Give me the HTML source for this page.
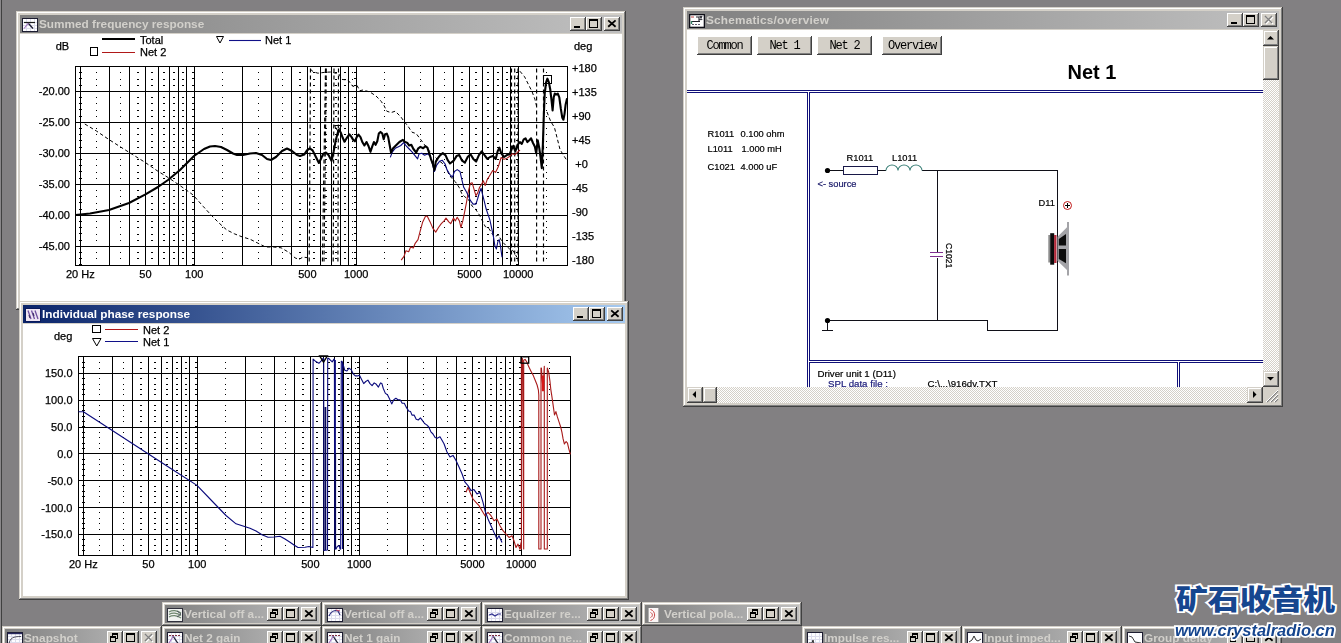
<!DOCTYPE html><html><head><meta charset="utf-8"><title>Speaker crossover simulation</title><style>
html,body{margin:0;padding:0}
body{width:1341px;height:643px;overflow:hidden;background:#828082;position:relative;font-family:"Liberation Sans",sans-serif;}
.win,.mini{will-change:transform}
.edge{position:absolute;left:0;top:0;width:2px;height:643px;background:linear-gradient(90deg,#8a888a 0 1px,#404040 1px 2px)}
.win{position:absolute;background:#d4d0c8;box-shadow:inset -1px -1px 0 #404040,inset 1px 1px 0 #d4d0c8,inset -2px -2px 0 #808080,inset 2px 2px 0 #fff}
.tb{position:absolute;left:4px;top:4px;right:4px;height:18px;background:linear-gradient(90deg,#808080,#c0c0c0)}
.tb.act{background:linear-gradient(90deg,#0a246a,#a6caf0)}
.tt{position:absolute;left:19px;top:1.5px;font-weight:bold;font-size:11.8px;line-height:15px;color:#d2d0cb;white-space:nowrap}
.act .tt{color:#fff}
.ic{position:absolute;left:2px;top:3px;width:16px;height:14px}
.btn{position:absolute;top:2px;width:16px;height:14px;background:#d4d0c8;box-shadow:inset -1px -1px 0 #404040,inset 1px 1px 0 #fff,inset -2px -2px 0 #808080,inset 2px 2px 0 #d4d0c8}
.btn svg{position:absolute;left:0;top:0}
.cl{position:absolute;left:4px;top:23px;right:4px;bottom:4px;background:#fff;overflow:hidden}
.mini{position:absolute;width:160px;height:24px;background:#d4d0c8;box-shadow:inset -1px -1px 0 #404040,inset 1px 1px 0 #d4d0c8,inset -2px -2px 0 #808080,inset 2px 2px 0 #fff}
.mini .tb{left:3px;top:3px;right:3px}
svg text{font-family:"Liberation Sans",sans-serif}
.pb{position:absolute;top:36px;height:19px;background:#d4d0c8;box-shadow:inset -1px -1px 0 #404040,inset 1px 1px 0 #fff,inset -2px -2px 0 #808080;font-family:"Liberation Mono",monospace;font-size:12px;letter-spacing:-1.2px;line-height:20px;text-align:center;color:#000}
.sb{position:absolute;background-color:#eae8e4;background-image:conic-gradient(#fff 25%,#d4d0c8 0 50%,#fff 0 75%,#d4d0c8 0);background-size:2px 2px}
.sbtn{position:absolute;width:16px;height:16px;background:#d4d0c8;box-shadow:inset -1px -1px 0 #404040,inset 1px 1px 0 #d4d0c8,inset -2px -2px 0 #808080,inset 2px 2px 0 #fff}
.sbtn svg{position:absolute;left:0;top:0}
.wm1{position:absolute;left:1175.5px;top:578px;font-family:"Noto Sans CJK SC",sans-serif;font-weight:900;font-size:31.5px;line-height:44px;color:#16468f;-webkit-text-stroke:4px #fff;paint-order:stroke fill;white-space:nowrap;transform:scale(1.01,0.9);transform-origin:0 0}
.wm2{position:absolute;left:1175px;top:620px;font-weight:bold;font-style:italic;font-size:16.5px;line-height:20px;color:#16468f;-webkit-text-stroke:3.5px #fff;paint-order:stroke fill;white-space:nowrap}
</style></head><body>
<div class="edge"></div>
<div class="win" style="left:16px;top:11px;width:610px;height:299px">
<div class="tb"><svg class="ic" width="16" height="14" viewBox="0 0 16 14"><rect x="0.5" y="0.5" width="15" height="13" fill="#fdfdff" stroke="#1c1c30"/><path d="M1,4.5 H15 M1,7.5 H15 M1,10.5 H15 M4.5,1 V13 M8.5,1 V13 M12.5,1 V13" stroke="#dcdcec" stroke-width="1"/><path d="M2,4.5 H13" stroke="#181818" stroke-width="1.2"/><path d="M6,5 L11,10.5" stroke="#181830" stroke-width="1.3"/><path d="M6.5,5 L2,10.5" stroke="#a070c0" stroke-width="1.1"/></svg><div class="tt">Summed frequency response</div><div class="btn" style="right:36px"><svg width="16" height="14"><rect x="4" y="9" width="6" height="2" fill="#000"/></svg></div><div class="btn" style="right:20px"><svg width="16" height="14"><rect x="3.5" y="2.5" width="8" height="8" fill="none" stroke="#000"/><rect x="3" y="2" width="9" height="2" fill="#000"/></svg></div><div class="btn" style="right:0px;margin-right:2px"><svg width="16" height="14"><path d="M4.2,3.4 L11.6,9.8 M11.6,3.4 L4.2,9.8" stroke="#000" stroke-width="1.8" fill="none"/></svg></div></div>
<div class="cl"><svg style="position:absolute;left:0;top:0" width="602" height="272" viewBox="20 34 602 272"><g stroke="#000" stroke-width="1" shape-rendering="crispEdges">
<line x1="80.5" y1="66.5" x2="80.5" y2="265.5"/>
<line x1="109.5" y1="66.5" x2="109.5" y2="265.5"/>
<line x1="129.5" y1="66.5" x2="129.5" y2="265.5"/>
<line x1="145.5" y1="66.5" x2="145.5" y2="265.5"/>
<line x1="158.5" y1="66.5" x2="158.5" y2="265.5"/>
<line x1="169.5" y1="66.5" x2="169.5" y2="265.5"/>
<line x1="178.5" y1="66.5" x2="178.5" y2="265.5"/>
<line x1="186.5" y1="66.5" x2="186.5" y2="265.5"/>
<line x1="194.5" y1="66.5" x2="194.5" y2="265.5"/>
<line x1="242.5" y1="66.5" x2="242.5" y2="265.5"/>
<line x1="271.5" y1="66.5" x2="271.5" y2="265.5"/>
<line x1="291.5" y1="66.5" x2="291.5" y2="265.5"/>
<line x1="307.5" y1="66.5" x2="307.5" y2="265.5"/>
<line x1="320.5" y1="66.5" x2="320.5" y2="265.5"/>
<line x1="331.5" y1="66.5" x2="331.5" y2="265.5"/>
<line x1="340.5" y1="66.5" x2="340.5" y2="265.5"/>
<line x1="348.5" y1="66.5" x2="348.5" y2="265.5"/>
<line x1="356.5" y1="66.5" x2="356.5" y2="265.5"/>
<line x1="404.5" y1="66.5" x2="404.5" y2="265.5"/>
<line x1="433.5" y1="66.5" x2="433.5" y2="265.5"/>
<line x1="453.5" y1="66.5" x2="453.5" y2="265.5"/>
<line x1="469.5" y1="66.5" x2="469.5" y2="265.5"/>
<line x1="482.5" y1="66.5" x2="482.5" y2="265.5"/>
<line x1="493.5" y1="66.5" x2="493.5" y2="265.5"/>
<line x1="502.5" y1="66.5" x2="502.5" y2="265.5"/>
<line x1="510.5" y1="66.5" x2="510.5" y2="265.5"/>
<line x1="518.5" y1="66.5" x2="518.5" y2="265.5"/>
<line x1="75.5" y1="91.5" x2="567.5" y2="91.5"/>
<line x1="75.5" y1="122.5" x2="567.5" y2="122.5"/>
<line x1="75.5" y1="153.5" x2="567.5" y2="153.5"/>
<line x1="75.5" y1="184.5" x2="567.5" y2="184.5"/>
<line x1="75.5" y1="215.5" x2="567.5" y2="215.5"/>
<line x1="75.5" y1="246.5" x2="567.5" y2="246.5"/>
</g>
<rect x="75.5" y="66.5" width="492.0" height="199.0" fill="none" stroke="#000" stroke-width="1" shape-rendering="crispEdges"/>
<g stroke="#000" stroke-dasharray="1 5.200" shape-rendering="crispEdges">
<line x1="96.7" y1="72.3" x2="96.7" y2="265.5" stroke-width="1.5"/>
<line x1="120.3" y1="72.3" x2="120.3" y2="265.5" stroke-width="1.5"/>
<line x1="138.0" y1="72.3" x2="138.0" y2="265.5" stroke-width="1.5"/>
<line x1="152.1" y1="72.3" x2="152.1" y2="265.5" stroke-width="1.5"/>
<line x1="163.9" y1="72.3" x2="163.9" y2="265.5" stroke-width="1.5"/>
<line x1="174.0" y1="72.3" x2="174.0" y2="265.5" stroke-width="1.5"/>
<line x1="182.8" y1="72.3" x2="182.8" y2="265.5" stroke-width="1.5"/>
<line x1="222.7" y1="72.3" x2="222.7" y2="265.5" stroke-width="1.5"/>
<line x1="258.7" y1="72.3" x2="258.7" y2="265.5" stroke-width="1.5"/>
<line x1="282.3" y1="72.3" x2="282.3" y2="265.5" stroke-width="1.5"/>
<line x1="300.0" y1="72.3" x2="300.0" y2="265.5" stroke-width="1.5"/>
<line x1="314.1" y1="72.3" x2="314.1" y2="265.5" stroke-width="1.5"/>
<line x1="325.9" y1="72.3" x2="325.9" y2="265.5" stroke-width="1.5"/>
<line x1="336.0" y1="72.3" x2="336.0" y2="265.5" stroke-width="1.5"/>
<line x1="344.8" y1="72.3" x2="344.8" y2="265.5" stroke-width="1.5"/>
<line x1="352.6" y1="72.3" x2="352.6" y2="265.5" stroke-width="1.5"/>
<line x1="384.7" y1="72.3" x2="384.7" y2="265.5" stroke-width="1.5"/>
<line x1="420.7" y1="72.3" x2="420.7" y2="265.5" stroke-width="1.5"/>
<line x1="444.3" y1="72.3" x2="444.3" y2="265.5" stroke-width="1.5"/>
<line x1="462.0" y1="72.3" x2="462.0" y2="265.5" stroke-width="1.5"/>
<line x1="476.1" y1="72.3" x2="476.1" y2="265.5" stroke-width="1.5"/>
<line x1="487.9" y1="72.3" x2="487.9" y2="265.5" stroke-width="1.5"/>
<line x1="498.0" y1="72.3" x2="498.0" y2="265.5" stroke-width="1.5"/>
<line x1="506.8" y1="72.3" x2="506.8" y2="265.5" stroke-width="1.5"/>
<line x1="546.7" y1="72.3" x2="546.7" y2="265.5" stroke-width="1.5"/>
<line x1="80.5" y1="72.2" x2="80.5" y2="265.5" stroke-width="3"/>
<line x1="193.7" y1="72.2" x2="193.7" y2="265.5" stroke-width="2.6"/>
<line x1="355.7" y1="72.2" x2="355.7" y2="265.5" stroke-width="2.6"/>
<line x1="517.7" y1="72.2" x2="517.7" y2="265.5" stroke-width="2.6"/>
</g>
<polyline points="84.8,124.0 96.4,131.0 108.9,139.5 119.8,146.5 132.2,154.3 144.7,162.1 157.1,170.7 169.5,178.4 182.0,187.0 192.9,194.8 203.3,206.5 211.1,215.1 218.9,222.9 226.7,229.9 234.4,233.8 242.2,236.9 250.0,239.2 257.8,243.1 265.5,247.0 273.3,247.0 281.1,247.8 288.9,252.4 295.1,257.9 299.0,259.4 302.9,257.1 309.1,257.9" fill="none" stroke="#000" stroke-width="1" stroke-linejoin="round" stroke-dasharray="3.5 2.5"/>
<polyline points="310.5,69.3 313.2,71.7 317.9,73.2 325.0,72.3 331.0,72.0 338.9,74.0 342.0,79.4 348.2,80.2 352.8,86.4 357.1,85.6 359.8,90.7 363.0,90.0 370.0,92.0 376.0,96.0 380.0,100.0 381.2,101.4 384.0,105.6 386.8,111.2 391.0,112.6 395.2,111.2 400.8,116.8 404.3,121.7 407.8,125.9 412.0,132.2 416.2,133.6 420.4,139.2 424.6,144.8 428.8,150.4 433.0,155.0 438.0,160.0 442.0,163.0 446.0,166.8 448.8,174.3 451.6,178.0 455.3,181.7 459.1,187.3 461.9,193.9 464.7,196.7 468.4,199.5 472.1,206.0 475.9,209.7 479.6,215.3 482.4,220.9 485.2,226.5 488.9,228.4 491.7,233.1 494.5,236.8 498.3,234.9 502.0,241.5 505.7,245.2 509.5,248.9 513.2,250.8 516.9,257.3" fill="none" stroke="#000" stroke-width="1" stroke-linejoin="round" stroke-dasharray="3.5 2.5"/>
<polyline points="519.9,71.2 524.6,76.8 528.3,84.2 532.1,91.7 534.9,99.2 536.5,106.0" fill="none" stroke="#000" stroke-width="1" stroke-linejoin="round" stroke-dasharray="3.5 2.5"/>
<polyline points="547.0,112.0 550.7,121.4 554.4,127.3 557.2,138.3 560.0,149.4 562.8,154.2 566.6,160.0" fill="none" stroke="#000" stroke-width="1" stroke-linejoin="round" stroke-dasharray="3.5 2.5"/>
<line x1="310.5" y1="68.5" x2="309.2" y2="262.5" stroke="#000" stroke-width="1.15" stroke-dasharray="4 3"/>
<line x1="325.5" y1="68.5" x2="322.4" y2="262.5" stroke="#000" stroke-width="1.15" stroke-dasharray="4 3"/>
<line x1="326.3" y1="68.5" x2="324" y2="262.5" stroke="#000" stroke-width="1.15" stroke-dasharray="4 3"/>
<line x1="338.5" y1="68.5" x2="337.9" y2="262.5" stroke="#000" stroke-width="1.15" stroke-dasharray="4 3"/>
<line x1="334" y1="68.5" x2="333.2" y2="262.5" stroke="#000" stroke-width="1.15" stroke-dasharray="4 3"/>
<line x1="511.5" y1="68.5" x2="511.5" y2="262.5" stroke="#000" stroke-width="1.15" stroke-dasharray="4 3"/>
<line x1="514.7" y1="68.5" x2="514.7" y2="262.5" stroke="#000" stroke-width="1.15" stroke-dasharray="4 3"/>
<line x1="518" y1="68.5" x2="518" y2="262.5" stroke="#000" stroke-width="1.15" stroke-dasharray="4 3"/>
<line x1="536.6" y1="68.5" x2="536.6" y2="262.5" stroke="#000" stroke-width="1.15" stroke-dasharray="4 3"/>
<line x1="543.5" y1="68.5" x2="543.5" y2="262.5" stroke="#000" stroke-width="1.15" stroke-dasharray="4 3"/>
<polyline points="401.2,260.1 404.0,256.4 405.9,250.8 408.7,251.7 410.5,247.1 413.3,248.0 415.2,243.3 418.0,239.6 419.9,232.1 422.7,221.9 425.5,216.3 427.3,216.3 430.1,221.9 432.9,228.4 435.7,232.1 438.5,227.5 441.3,223.7 444.1,220.9 446.0,218.1 448.8,221.9 450.7,223.7 453.5,218.1 455.3,220.9 457.2,217.2 459.4,220.9 460.9,227.5 462.8,220.9 464.7,211.6 466.5,202.3 468.4,191.1 470.3,183.6 472.1,182.7 474.0,189.2 475.9,195.7 477.7,192.9 479.6,187.3 481.5,184.5 483.3,180.8 485.2,185.5 487.1,179.9 489.9,175.2 492.7,170.5 495.5,172.4 498.3,166.8 501.1,157.5 503.9,159.3 506.7,158.4 509.5,156.5 512.3,153.7 515.1,154.7 517.9,151.9 520.0,150.0" fill="none" stroke="#a81a1a" stroke-width="1.1" stroke-linejoin="round" />
<polyline points="390.3,157.4 392.4,151.8 395.2,148.3 398.0,146.9 400.8,145.5 403.6,142.7 406.4,146.2 409.2,149.0 412.0,151.8 414.8,155.3 417.6,158.8 419.0,153.9 421.8,153.2 424.6,155.3 427.4,153.9 430.1,155.8 432.0,162.2 434.4,171.5 436.7,165.1 439.5,161.3 442.3,160.3 445.1,164.0 446.9,169.6 449.7,174.3 452.5,177.1 454.4,171.5 457.2,169.6 460.0,171.5 461.9,179.9 463.7,187.3 466.5,192.0 468.4,195.7 470.3,200.4 473.1,204.1 475.9,204.1 477.7,198.5 479.6,192.0 481.1,188.3 482.4,193.9 484.3,201.3 486.1,208.8 488.0,214.4 489.9,220.0 491.7,228.4 493.6,237.7 494.9,246.1 496.4,248.9 497.9,241.5 499.2,239.6 500.5,246.1 502.0,257.3" fill="none" stroke="#0a0a7c" stroke-width="1.1" stroke-linejoin="round" />
<polyline points="75.5,215.0 90.0,213.5 109.0,210.0 129.0,203.0 145.0,194.6 158.0,187.0 168.0,180.0 180.0,170.0 194.0,156.0 204.0,149.0 210.0,146.5 215.0,146.0 221.0,147.0 227.0,150.0 233.0,153.5 237.0,155.0 243.0,155.0 250.0,153.5 256.0,153.0 262.0,155.0 267.0,159.0 271.0,160.0 276.0,157.0 282.0,151.0 287.0,148.5 292.0,151.0 297.0,155.0 300.0,156.0 304.2,154.6 307.0,150.4 309.8,148.3 312.6,150.4 315.4,156.0 318.9,163.0 321.0,158.8 323.1,153.9 325.9,152.5 328.7,155.3 331.5,160.9 333.6,151.8 335.7,140.6 338.5,130.1 340.6,132.2 342.7,137.8 344.5,141.7 346.9,137.8 349.3,134.3 351.1,136.4 353.2,139.9 354.9,141.3 356.7,137.1 358.5,134.7 360.5,137.1 362.3,142.0 364.4,145.5 366.5,142.0 368.6,146.2 370.4,151.8 372.1,146.9 373.9,142.0 375.6,144.8 377.3,141.3 378.8,133.6 380.5,131.9 382.3,133.6 383.7,139.2 385.1,134.3 386.8,133.6 388.2,137.1 389.6,144.8 391.0,152.5 393.1,148.3 396.6,144.8 399.4,142.0 402.9,139.9 405.0,142.0 407.1,142.7 409.2,145.5 411.3,144.8 413.4,149.0 416.2,152.5 418.3,148.3 420.4,146.9 423.2,148.3 425.3,146.2 427.4,147.6 428.8,151.8 430.9,158.8 433.0,164.4 434.4,170.0 435.8,161.6 437.9,158.1 440.0,155.3 442.8,153.2 445.6,155.3 447.7,160.2 450.0,163.5 453.7,160.7 456.5,156.1 459.3,155.1 462.1,160.7 464.9,162.6 467.7,157.0 470.5,154.2 473.3,158.9 476.1,161.6 478.9,155.1 481.7,151.4 484.5,155.1 487.3,158.9 490.1,157.0 492.9,156.1 495.7,158.9 497.6,151.4 499.4,147.7 501.3,153.3 504.1,157.0 506.9,155.1 509.7,154.2 511.5,149.5 513.4,145.8 515.3,151.4 517.5,144.9 519.9,142.1 521.8,143.9 523.7,139.3 525.5,138.3 527.4,142.1 529.3,140.2 531.1,138.3 533.0,143.0 534.9,146.7 536.2,153.3 537.7,140.2 539.2,147.7 540.5,157.0 541.8,168.2 542.9,143.9 543.8,116.0 544.7,93.6 546.1,82.4 547.4,78.7 548.9,82.4 550.3,89.8 551.6,101.0 552.6,110.4 553.7,97.3 554.8,93.6 556.3,94.5 557.8,93.6 559.3,97.3 560.8,108.5 562.3,117.8 563.4,119.7 564.5,114.1 565.6,104.8 567.1,98.2" fill="none" stroke="#000" stroke-width="2.1" stroke-linejoin="round" />
<path d="M334.5,125.5 h7 l-3.5,6 z" fill="none" stroke="#000" stroke-width="1"/>
<rect x="543.5" y="75.5" width="8" height="8" fill="none" stroke="#000" stroke-width="1"/>
<text x="70" y="95.4" font-size="11" text-anchor="end" fill="#000" stroke="#000" stroke-width=".25" >-20.00</text>
<text x="70" y="126.4" font-size="11" text-anchor="end" fill="#000" stroke="#000" stroke-width=".25" >-25.00</text>
<text x="70" y="157.4" font-size="11" text-anchor="end" fill="#000" stroke="#000" stroke-width=".25" >-30.00</text>
<text x="70" y="188.4" font-size="11" text-anchor="end" fill="#000" stroke="#000" stroke-width=".25" >-35.00</text>
<text x="70" y="219.4" font-size="11" text-anchor="end" fill="#000" stroke="#000" stroke-width=".25" >-40.00</text>
<text x="70" y="250.4" font-size="11" text-anchor="end" fill="#000" stroke="#000" stroke-width=".25" >-45.00</text>
<text x="572" y="71.7" font-size="11" text-anchor="start" fill="#000" stroke="#000" stroke-width=".25" >+180</text>
<text x="572" y="95.77000000000001" font-size="11" text-anchor="start" fill="#000" stroke="#000" stroke-width=".25" >+135</text>
<text x="572" y="119.84" font-size="11" text-anchor="start" fill="#000" stroke="#000" stroke-width=".25" >+90</text>
<text x="572" y="143.91000000000003" font-size="11" text-anchor="start" fill="#000" stroke="#000" stroke-width=".25" >+45</text>
<text x="575.3" y="167.98000000000002" font-size="11" text-anchor="start" fill="#000" stroke="#000" stroke-width=".25" >+0</text>
<text x="572" y="192.05" font-size="11" text-anchor="start" fill="#000" stroke="#000" stroke-width=".25" >-45</text>
<text x="572" y="216.12" font-size="11" text-anchor="start" fill="#000" stroke="#000" stroke-width=".25" >-90</text>
<text x="572" y="240.19" font-size="11" text-anchor="start" fill="#000" stroke="#000" stroke-width=".25" >-135</text>
<text x="572" y="264.26" font-size="11" text-anchor="start" fill="#000" stroke="#000" stroke-width=".25" >-180</text>
<text x="145.43314070243503" y="278" font-size="11" text-anchor="middle" fill="#000" stroke="#000" stroke-width=".25" >50</text>
<text x="194.2" y="278" font-size="11" text-anchor="middle" fill="#000" stroke="#000" stroke-width=".25" >100</text>
<text x="307.433140702435" y="278" font-size="11" text-anchor="middle" fill="#000" stroke="#000" stroke-width=".25" >500</text>
<text x="356.2" y="278" font-size="11" text-anchor="middle" fill="#000" stroke="#000" stroke-width=".25" >1000</text>
<text x="469.433140702435" y="278" font-size="11" text-anchor="middle" fill="#000" stroke="#000" stroke-width=".25" >5000</text>
<text x="518.2" y="278" font-size="11" text-anchor="middle" fill="#000" stroke="#000" stroke-width=".25" >10000</text>
<text x="66" y="278" font-size="11" text-anchor="start" fill="#000" stroke="#000" stroke-width=".25" >20 Hz</text>
<text x="55.7" y="50" font-size="11" text-anchor="start" fill="#000" stroke="#000" stroke-width=".25" >dB</text>
<text x="574" y="50" font-size="11" text-anchor="start" fill="#000" stroke="#000" stroke-width=".25" >deg</text>
<line x1="102" y1="39" x2="135" y2="39" stroke="#000" stroke-width="2.2"/>
<text x="140" y="44" font-size="11" text-anchor="start" fill="#000" stroke="#000" stroke-width=".25" >Total</text>
<rect x="90.5" y="47.5" width="7" height="8" fill="none" stroke="#000"/>
<line x1="102" y1="52.5" x2="135" y2="52.5" stroke="#b01818" stroke-width="1.1"/>
<text x="140" y="56" font-size="11" text-anchor="start" fill="#000" stroke="#000" stroke-width=".25" >Net 2</text>
<path d="M216.5,36.5 h7 l-3.5,6.5 z" fill="none" stroke="#000"/>
<line x1="229" y1="40.5" x2="261" y2="40.5" stroke="#101088" stroke-width="1.1"/>
<text x="265" y="44" font-size="11" text-anchor="start" fill="#000" stroke="#000" stroke-width=".25" >Net 1</text></svg></div>
</div>
<div class="win" style="left:19px;top:301px;width:610px;height:299px">
<div class="tb act"><svg class="ic" width="16" height="14" viewBox="0 0 16 14"><rect x="0.5" y="0.5" width="15" height="13" fill="#efe6f4" stroke="#0a1a5c"/><path d="M3,2.5 L6,11 M6.5,2.5 L9.5,11 M10,2.5 L13,11" stroke="#7050a0" stroke-width="1.3" fill="none"/><path d="M4,7 L5,10 M8,5 L9,8" stroke="#403068" stroke-width="1.2"/></svg><div class="tt">Individual phase response</div><div class="btn" style="right:36px"><svg width="16" height="14"><rect x="4" y="9" width="6" height="2" fill="#000"/></svg></div><div class="btn" style="right:20px"><svg width="16" height="14"><rect x="3.5" y="2.5" width="8" height="8" fill="none" stroke="#000"/><rect x="3" y="2" width="9" height="2" fill="#000"/></svg></div><div class="btn" style="right:0px;margin-right:2px"><svg width="16" height="14"><path d="M4.2,3.4 L11.6,9.8 M11.6,3.4 L4.2,9.8" stroke="#000" stroke-width="1.8" fill="none"/></svg></div></div>
<div class="cl"><svg style="position:absolute;left:0;top:0" width="602" height="272" viewBox="23 324 602 272"><g stroke="#000" stroke-width="1" shape-rendering="crispEdges">
<line x1="83.5" y1="356.5" x2="83.5" y2="555.0"/>
<line x1="112.5" y1="356.5" x2="112.5" y2="555.0"/>
<line x1="132.5" y1="356.5" x2="132.5" y2="555.0"/>
<line x1="148.5" y1="356.5" x2="148.5" y2="555.0"/>
<line x1="161.5" y1="356.5" x2="161.5" y2="555.0"/>
<line x1="172.5" y1="356.5" x2="172.5" y2="555.0"/>
<line x1="181.5" y1="356.5" x2="181.5" y2="555.0"/>
<line x1="189.5" y1="356.5" x2="189.5" y2="555.0"/>
<line x1="197.5" y1="356.5" x2="197.5" y2="555.0"/>
<line x1="245.5" y1="356.5" x2="245.5" y2="555.0"/>
<line x1="274.5" y1="356.5" x2="274.5" y2="555.0"/>
<line x1="294.5" y1="356.5" x2="294.5" y2="555.0"/>
<line x1="310.5" y1="356.5" x2="310.5" y2="555.0"/>
<line x1="323.5" y1="356.5" x2="323.5" y2="555.0"/>
<line x1="334.5" y1="356.5" x2="334.5" y2="555.0"/>
<line x1="343.5" y1="356.5" x2="343.5" y2="555.0"/>
<line x1="351.5" y1="356.5" x2="351.5" y2="555.0"/>
<line x1="359.5" y1="356.5" x2="359.5" y2="555.0"/>
<line x1="407.5" y1="356.5" x2="407.5" y2="555.0"/>
<line x1="436.5" y1="356.5" x2="436.5" y2="555.0"/>
<line x1="456.5" y1="356.5" x2="456.5" y2="555.0"/>
<line x1="472.5" y1="356.5" x2="472.5" y2="555.0"/>
<line x1="485.5" y1="356.5" x2="485.5" y2="555.0"/>
<line x1="496.5" y1="356.5" x2="496.5" y2="555.0"/>
<line x1="505.5" y1="356.5" x2="505.5" y2="555.0"/>
<line x1="513.5" y1="356.5" x2="513.5" y2="555.0"/>
<line x1="521.5" y1="356.5" x2="521.5" y2="555.0"/>
<line x1="78.5" y1="373.5" x2="570.5" y2="373.5"/>
<line x1="78.5" y1="400.5" x2="570.5" y2="400.5"/>
<line x1="78.5" y1="427.5" x2="570.5" y2="427.5"/>
<line x1="78.5" y1="453.5" x2="570.5" y2="453.5"/>
<line x1="78.5" y1="480.5" x2="570.5" y2="480.5"/>
<line x1="78.5" y1="507.5" x2="570.5" y2="507.5"/>
<line x1="78.5" y1="534.5" x2="570.5" y2="534.5"/>
</g>
<rect x="78.5" y="356.5" width="492.0" height="198.5" fill="none" stroke="#000" stroke-width="1" shape-rendering="crispEdges"/>
<g stroke="#000" stroke-dasharray="1 4.365" shape-rendering="crispEdges">
<line x1="99.7" y1="362.2" x2="99.7" y2="555.0" stroke-width="1.5"/>
<line x1="123.3" y1="362.2" x2="123.3" y2="555.0" stroke-width="1.5"/>
<line x1="141.0" y1="362.2" x2="141.0" y2="555.0" stroke-width="1.5"/>
<line x1="155.1" y1="362.2" x2="155.1" y2="555.0" stroke-width="1.5"/>
<line x1="166.9" y1="362.2" x2="166.9" y2="555.0" stroke-width="1.5"/>
<line x1="177.0" y1="362.2" x2="177.0" y2="555.0" stroke-width="1.5"/>
<line x1="185.8" y1="362.2" x2="185.8" y2="555.0" stroke-width="1.5"/>
<line x1="225.7" y1="362.2" x2="225.7" y2="555.0" stroke-width="1.5"/>
<line x1="261.7" y1="362.2" x2="261.7" y2="555.0" stroke-width="1.5"/>
<line x1="285.3" y1="362.2" x2="285.3" y2="555.0" stroke-width="1.5"/>
<line x1="303.0" y1="362.2" x2="303.0" y2="555.0" stroke-width="1.5"/>
<line x1="317.1" y1="362.2" x2="317.1" y2="555.0" stroke-width="1.5"/>
<line x1="328.9" y1="362.2" x2="328.9" y2="555.0" stroke-width="1.5"/>
<line x1="339.0" y1="362.2" x2="339.0" y2="555.0" stroke-width="1.5"/>
<line x1="347.8" y1="362.2" x2="347.8" y2="555.0" stroke-width="1.5"/>
<line x1="355.6" y1="362.2" x2="355.6" y2="555.0" stroke-width="1.5"/>
<line x1="387.7" y1="362.2" x2="387.7" y2="555.0" stroke-width="1.5"/>
<line x1="423.7" y1="362.2" x2="423.7" y2="555.0" stroke-width="1.5"/>
<line x1="447.3" y1="362.2" x2="447.3" y2="555.0" stroke-width="1.5"/>
<line x1="465.0" y1="362.2" x2="465.0" y2="555.0" stroke-width="1.5"/>
<line x1="479.1" y1="362.2" x2="479.1" y2="555.0" stroke-width="1.5"/>
<line x1="490.9" y1="362.2" x2="490.9" y2="555.0" stroke-width="1.5"/>
<line x1="501.0" y1="362.2" x2="501.0" y2="555.0" stroke-width="1.5"/>
<line x1="509.8" y1="362.2" x2="509.8" y2="555.0" stroke-width="1.5"/>
<line x1="549.7" y1="362.2" x2="549.7" y2="555.0" stroke-width="1.5"/>
<line x1="83.5" y1="362.1" x2="83.5" y2="555.0" stroke-width="3"/>
<line x1="196.7" y1="362.1" x2="196.7" y2="555.0" stroke-width="2.6"/>
<line x1="358.7" y1="362.1" x2="358.7" y2="555.0" stroke-width="2.6"/>
<line x1="520.7" y1="362.1" x2="520.7" y2="555.0" stroke-width="2.6"/>
</g>
<polyline points="466.0,492.3 468.0,487.2 470.0,492.3 473.0,499.0 476.0,502.3 479.0,505.6 482.0,510.7 485.0,515.7 488.0,512.3 491.0,515.7 494.0,520.7 497.0,519.0 500.0,525.7 503.0,530.7 506.0,534.1 509.0,537.4 512.0,535.8 514.0,540.8 516.0,547.5 518.0,544.1 520.0,549.2 521.0,542.5 521.4,549.0 521.4,360.0 522.5,358.5 523.7,549.0 523.7,360.3 525.1,359.4 526.8,362.0 528.9,367.1 531.1,371.4 533.3,375.6 535.4,380.8 537.1,385.0 538.4,390.2 538.8,395.0 538.8,549.0 541.0,549.0 541.0,368.0 541.4,368.0 542.2,379.0 543.0,391.0 543.8,375.0 544.3,366.2 544.3,549.0 547.3,549.0 547.3,368.0 548.7,372.2 549.9,380.8 550.8,389.3 552.1,397.9 553.3,406.4 554.5,415.0 555.9,411.6 557.3,416.7 559.0,421.8 560.7,427.0 561.9,432.1 563.1,438.9 564.4,444.0 566.1,441.5 567.5,443.2 568.7,448.3 570.4,454.3" fill="none" stroke="#a81a1a" stroke-width="1.1" stroke-linejoin="round" />
<polyline points="542.9,375.6 542.9,391" stroke="#d81818" stroke-width="2.2" fill="none"/>
<polyline points="78.5,411.8 83.4,411.8 110.0,429.0 140.0,448.5 170.0,468.0 197.0,485.4 212.0,501.0 226.0,515.5 236.0,523.8 243.0,526.0 250.0,528.2 256.0,531.0 262.0,534.8 268.0,537.2 274.0,537.0 280.0,536.2 285.0,539.0 290.0,542.2 294.0,545.0 298.0,547.5 305.0,547.2 309.0,546.5 312.9,547.5 313.1,359.1 315.4,361.2 318.9,363.3 321.0,361.2 323.1,358.4 323.7,358.4 323.9,550.5 327.5,550.0 327.7,358.4 328.7,358.4 330.1,359.8 332.2,361.9 334.0,359.1 334.4,359.1 334.7,549.2 336.0,549.0 337.3,546.4 339.2,545.5 340.1,549.2 340.7,549.0 341.3,361.2 342.0,361.2 343.4,365.4 344.8,370.3 346.9,371.0 349.0,368.2 351.1,369.6 353.2,373.8 355.3,375.9 357.4,375.9 359.5,375.2 361.6,379.4 363.7,383.6 365.8,381.5 367.9,380.1 370.0,383.6 372.1,385.7 374.2,382.9 376.3,384.3 378.4,387.1 380.5,382.9 381.9,383.6 383.3,388.5 385.4,393.4 387.5,394.8 389.6,399.0 391.7,403.9 393.8,399.7 395.9,398.3 398.0,399.7 400.1,399.7 402.2,403.2 404.3,403.2 406.4,407.4 408.5,410.9 410.6,411.6 412.0,415.1 414.1,415.1 416.2,419.3 418.3,420.0 420.4,417.9 422.5,420.7 424.6,423.5 426.7,424.9 428.8,427.0 430.9,431.9 433.0,434.0 435.1,437.5 437.2,438.2 440.0,436.8 444.0,443.7 447.0,452.0 450.0,457.0 453.0,455.4 456.0,460.5 459.0,467.0 462.0,473.8 465.0,482.2 468.0,485.6 471.0,490.6 474.0,489.6 477.0,493.9 480.0,492.3 483.0,502.3 485.0,510.7 488.0,519.0 491.0,525.7 494.0,532.4 497.0,539.1 499.0,535.8 502.0,542.5" fill="none" stroke="#0a0a7c" stroke-width="1.1" stroke-linejoin="round" />
<polyline points="325.4,407.0 325.4,550.0" fill="none" stroke="#080858" stroke-width="1.8" stroke-linejoin="round" />
<polyline points="335.2,454.0 335.2,549.0" fill="none" stroke="#080858" stroke-width="1.8" stroke-linejoin="round" />
<polyline points="335.4,360.0 335.4,454.0" fill="none" stroke="#0a0a7c" stroke-width="1" stroke-linejoin="round" />
<polyline points="342.5,362.0 342.5,549.0" fill="none" stroke="#0a0a7c" stroke-width="1" stroke-linejoin="round" />
<path d="M319.6,355.8 h7.8 l-3.9,6.4 z" fill="none" stroke="#000" stroke-width="1.3"/>
<rect x="521" y="356.8" width="7.7" height="6.4" fill="none" stroke="#000" stroke-width="1.3"/>
<text x="72.5" y="377.42499999999995" font-size="11" text-anchor="end" fill="#000" stroke="#000" stroke-width=".25" >150.0</text>
<text x="72.5" y="404.25" font-size="11" text-anchor="end" fill="#000" stroke="#000" stroke-width=".25" >100.0</text>
<text x="72.5" y="431.075" font-size="11" text-anchor="end" fill="#000" stroke="#000" stroke-width=".25" >50.0</text>
<text x="72.5" y="457.9" font-size="11" text-anchor="end" fill="#000" stroke="#000" stroke-width=".25" >0.0</text>
<text x="72.5" y="484.72499999999997" font-size="11" text-anchor="end" fill="#000" stroke="#000" stroke-width=".25" >-50.0</text>
<text x="72.5" y="511.54999999999995" font-size="11" text-anchor="end" fill="#000" stroke="#000" stroke-width=".25" >-100.0</text>
<text x="72.5" y="538.375" font-size="11" text-anchor="end" fill="#000" stroke="#000" stroke-width=".25" >-150.0</text>
<text x="148.43314070243503" y="568" font-size="11" text-anchor="middle" fill="#000" stroke="#000" stroke-width=".25" >50</text>
<text x="197.2" y="568" font-size="11" text-anchor="middle" fill="#000" stroke="#000" stroke-width=".25" >100</text>
<text x="310.433140702435" y="568" font-size="11" text-anchor="middle" fill="#000" stroke="#000" stroke-width=".25" >500</text>
<text x="359.2" y="568" font-size="11" text-anchor="middle" fill="#000" stroke="#000" stroke-width=".25" >1000</text>
<text x="472.433140702435" y="568" font-size="11" text-anchor="middle" fill="#000" stroke="#000" stroke-width=".25" >5000</text>
<text x="521.2" y="568" font-size="11" text-anchor="middle" fill="#000" stroke="#000" stroke-width=".25" >10000</text>
<text x="69" y="568" font-size="11" text-anchor="start" fill="#000" stroke="#000" stroke-width=".25" >20 Hz</text>
<text x="54" y="340" font-size="11" text-anchor="start" fill="#000" stroke="#000" stroke-width=".25" >deg</text>
<rect x="92.5" y="325.5" width="8" height="7" fill="none" stroke="#000"/>
<line x1="105" y1="329.5" x2="138" y2="329.5" stroke="#b01818" stroke-width="1.1"/>
<text x="143" y="334" font-size="11" text-anchor="start" fill="#000" stroke="#000" stroke-width=".25" >Net 2</text>
<path d="M92.5,338.5 h8.5 l-4.25,7.5 z" fill="none" stroke="#000"/>
<line x1="105" y1="341.5" x2="138" y2="341.5" stroke="#101088" stroke-width="1.1"/>
<text x="143" y="346" font-size="11" text-anchor="start" fill="#000" stroke="#000" stroke-width=".25" >Net 1</text></svg></div>
</div>
<div class="win" style="left:683px;top:7px;width:600px;height:400px">
<div class="tb"><svg class="ic" width="16" height="14" viewBox="0 0 16 14"><rect x="0.5" y="0.5" width="15" height="13" fill="#fff" stroke="#101018" stroke-width="1.6"/><path d="M2,3 H5" stroke="#c04040" stroke-width="1"/><path d="M7,3 H10 V7 M11,2 L13,6 M13,2 L11,6" stroke="#202028" stroke-width="1.1" fill="none"/><path d="M2,7.5 H11" stroke="#202028" stroke-width="1"/><path d="M2.5,7 V10" stroke="#308060" stroke-width="1.4"/><path d="M3,10.5 H11" stroke="#606070" stroke-width="1" stroke-dasharray="2 1"/></svg><div class="tt"><span style="letter-spacing:.2px">Schematics/overview</span></div><div class="btn" style="right:36px"><svg width="16" height="14"><rect x="4" y="9" width="6" height="2" fill="#000"/></svg></div><div class="btn" style="right:20px"><svg width="16" height="14"><rect x="3.5" y="2.5" width="8" height="8" fill="none" stroke="#000"/><rect x="3" y="2" width="9" height="2" fill="#000"/></svg></div><div class="btn" style="right:0px;margin-right:2px"><svg width="16" height="14"><path d="M5,4 L12,11 M12,4 L5,11" stroke="#fff" stroke-width="1.4" fill="none"/><path d="M4,3 L11,10 M11,3 L4,10" stroke="#808080" stroke-width="1.4" fill="none"/></svg></div></div>
<div class="cl" id="schem">
<div class="pb" style="left:10px;top:6px;width:55px">Common</div>
<div class="pb" style="left:70px;top:6px;width:55px">Net 1</div>
<div class="pb" style="left:130px;top:6px;width:55px">Net 2</div>
<div class="pb" style="left:195px;top:6px;width:60px">Overview</div>
<svg style="position:absolute;left:0;top:0" width="576" height="357" viewBox="687 30 576 357"><g stroke="#101078" stroke-width="1" shape-rendering="crispEdges" fill="none">
<line x1="687" y1="90.5" x2="1263" y2="90.5"/>
<path d="M687,92.5 H807.5 V387"/>
<path d="M1263,92.5 H809.5 V360.5 H1263"/>
<path d="M809.5,387 V362.5 H1177.5 V387"/>
<path d="M1263,362.5 H1179.5 V387"/>
</g>
<text x="1092" y="79" font-size="20" font-weight="bold" text-anchor="middle" fill="#000">Net 1</text>
<text x="707.5" y="137" font-size="9.3" fill="#000" stroke="#000" stroke-width=".2" >R1011</text>
<text x="740.5" y="137" font-size="9.3" fill="#000" stroke="#000" stroke-width=".2" >0.100 ohm</text>
<text x="707.5" y="151.5" font-size="9.3" fill="#000" stroke="#000" stroke-width=".2" >L1011</text>
<text x="741.5" y="151.5" font-size="9.3" fill="#000" stroke="#000" stroke-width=".2" >1.000 mH</text>
<text x="707.5" y="169.8" font-size="9.3" fill="#000" stroke="#000" stroke-width=".2" >C1021</text>
<text x="740.5" y="169.8" font-size="9.3" fill="#000" stroke="#000" stroke-width=".2" >4.000 uF</text>
<g stroke="#101018" stroke-width="1" fill="none" shape-rendering="crispEdges">
<path d="M828,170.5 H843"/>
<path d="M877,170.5 H886"/>
<path d="M922,170.5 H1057.5 V330.5 H987.5 V320.5 H828"/>
<path d="M937.5,170.5 V252 M937.5,257.5 V320.5"/>
<path d="M827.5,320.5 V330.5 M822,330.5 H833"/>
</g>
<circle cx="827.5" cy="170.5" r="2.6" fill="#000"/>
<circle cx="827.5" cy="320.5" r="2.6" fill="#000"/>
<rect x="843.5" y="166.5" width="34" height="8" fill="#fff" stroke="#181848" stroke-width="1" shape-rendering="crispEdges"/>
<path d="M886,170.5 a6,5.5 0 0 1 12,0 a6,5.5 0 0 1 12,0 a6,5.5 0 0 1 12,0" fill="none" stroke="#3c8078" stroke-width="1.1"/>
<path d="M929.5,252.5 H943 M929.5,256.5 H943" stroke="#803090" stroke-width="1.1" fill="none" shape-rendering="crispEdges"/>
<text transform="translate(945.5,243) rotate(90)" font-size="8.6" fill="#000" stroke="#000" stroke-width=".2">C1021</text>
<text x="846.5" y="161" font-size="9.3" fill="#000" stroke="#000" stroke-width=".2" >R1011</text>
<text x="892" y="161" font-size="9.3" fill="#000" stroke="#000" stroke-width=".2" >L1011</text>
<text x="817.5" y="186.7" font-size="9.3" fill="#181868" stroke="#181868" stroke-width=".2" >&lt;- source</text>
<text x="1038.5" y="206" font-size="9.3" fill="#000" stroke="#000" stroke-width=".2" >D11</text>
<circle cx="1067.5" cy="205.5" r="4" fill="#fff" stroke="#c01818" stroke-width="1"/>
<path d="M1065,205.5 H1070 M1067.5,203 V208" stroke="#000" stroke-width="1"/>
<rect x="1048.3" y="235" width="2" height="27.5" fill="#8c8c8c"/>
<rect x="1050.2" y="233.2" width="4" height="31.5" fill="#0c0c0c"/>
<rect x="1054.1" y="235" width="2.4" height="28" fill="#b02838"/>
<path d="M1057.5,236.7 L1067,227.3 V222 H1069 V275.5 H1067 V270 L1057.5,260.8 Z" fill="#a4a4a8"/>
<path d="M1058.8,239 L1066,234 V245.6 H1058.8 Z" fill="#0c0c0c"/>
<path d="M1058.8,249 H1066 V263.2 L1058.8,259 Z" fill="#0c0c0c"/>
<text x="817.5" y="377" font-size="9.7" fill="#000" stroke="#000" stroke-width=".2" >Driver unit 1 (D11)</text>
<text x="828" y="387.3" font-size="9.7" fill="#181878" stroke="#181878" stroke-width=".2" >SPL data file :</text>
<text x="927.5" y="387.3" font-size="9.7" fill="#000" stroke="#000" stroke-width=".2" >C:\...\916dv.TXT</text></svg>
<div class="sb" style="left:576px;top:0;width:16px;height:357px"></div>
<div class="sbtn" style="left:576px;top:0"><svg width="16" height="16"><path d="M4,9.5 L7.5,6 L11,9.5 Z" fill="#000"/></svg></div>
<div class="sbtn" style="left:576px;top:16px;height:34px"></div>
<div class="sbtn" style="left:576px;top:341px"><svg width="16" height="16"><path d="M4,6 L11,6 L7.5,9.5 Z" fill="#000"/></svg></div>
<div class="sb" style="left:0;top:357px;width:576px;height:16px"></div>
<div class="sbtn" style="left:0;top:357px"><svg width="16" height="16"><path d="M9,4 L9,11 L5.5,7.5 Z" fill="#000"/></svg></div>
<div class="sbtn" style="left:16px;top:357px;width:14px"></div>
<div class="sbtn" style="left:560px;top:357px"><svg width="16" height="16"><path d="M6,4 L6,11 L9.5,7.5 Z" fill="#000"/></svg></div>
<div style="position:absolute;left:576px;top:357px;width:16px;height:16px;background:#d4d0c8"><svg width="16" height="16"><path d="M15,4 L4,15 M15,8 L8,15 M15,12 L12,15" stroke="#808080" stroke-width="1.2"/><path d="M15,3 L3,15 M15,7 L7,15 M15,11 L11,15" stroke="#fff" stroke-width="1"/></svg></div>
</div></div>
<div class="mini" style="left:162px;top:602px"><div class="tb"><svg class="ic" width="16" height="14" viewBox="0 0 16 14"><rect x="0.5" y="0.5" width="15" height="13" fill="#f0f2f0" stroke="#30303c"/><path d="M2,4 C5,2 10,2 14,5 M2,6.5 C5,4.5 10,4.5 14,7.5 M2,9 C5,7 10,7 14,10" stroke="#708870" stroke-width="1.1" fill="none"/><path d="M10,3 L14,6 L10,9" stroke="#505860" stroke-width="1" fill="none"/></svg><div class="tt">Vertical off a...</div><div class="btn" style="right:36px"><svg width="16" height="14"><rect x="5.5" y="2.5" width="5" height="5" fill="none" stroke="#000"/><rect x="5" y="2" width="6" height="2" fill="#000"/><rect x="3.5" y="5.5" width="5" height="5" fill="#d4d0c8" stroke="#000"/><rect x="3" y="5" width="6" height="2" fill="#000"/></svg></div><div class="btn" style="right:20px"><svg width="16" height="14"><rect x="3.5" y="2.5" width="8" height="8" fill="none" stroke="#000"/><rect x="3" y="2" width="9" height="2" fill="#000"/></svg></div><div class="btn" style="right:0px;margin-right:2px"><svg width="16" height="14"><path d="M4.2,3.4 L11.6,9.8 M11.6,3.4 L4.2,9.8" stroke="#000" stroke-width="1.8" fill="none"/></svg></div></div></div>
<div class="mini" style="left:322px;top:602px"><div class="tb"><svg class="ic" width="16" height="14" viewBox="0 0 16 14"><rect x="0.5" y="0.5" width="15" height="13" fill="#fdfdff" stroke="#1c1c30"/><path d="M1,4.5 H15 M1,7.5 H15 M1,10.5 H15 M4.5,1 V13 M8.5,1 V13 M12.5,1 V13" stroke="#dcdcec" stroke-width="1"/><path d="M2,8 C4,3 8,2 11,3 L13,7" stroke="#303080" stroke-width="1.2" fill="none"/><path d="M9,2 L13,3" stroke="#c04060" stroke-width="1"/></svg><div class="tt">Vertical off a...</div><div class="btn" style="right:36px"><svg width="16" height="14"><rect x="5.5" y="2.5" width="5" height="5" fill="none" stroke="#000"/><rect x="5" y="2" width="6" height="2" fill="#000"/><rect x="3.5" y="5.5" width="5" height="5" fill="#d4d0c8" stroke="#000"/><rect x="3" y="5" width="6" height="2" fill="#000"/></svg></div><div class="btn" style="right:20px"><svg width="16" height="14"><rect x="3.5" y="2.5" width="8" height="8" fill="none" stroke="#000"/><rect x="3" y="2" width="9" height="2" fill="#000"/></svg></div><div class="btn" style="right:0px;margin-right:2px"><svg width="16" height="14"><path d="M4.2,3.4 L11.6,9.8 M11.6,3.4 L4.2,9.8" stroke="#000" stroke-width="1.8" fill="none"/></svg></div></div></div>
<div class="mini" style="left:482px;top:602px"><div class="tb"><svg class="ic" width="16" height="14" viewBox="0 0 16 14"><rect x="0.5" y="0.5" width="15" height="13" fill="#fdfdff" stroke="#1c1c30"/><path d="M1,4.5 H15 M1,7.5 H15 M1,10.5 H15 M4.5,1 V13 M8.5,1 V13 M12.5,1 V13" stroke="#dcdcec" stroke-width="1"/><path d="M2,7 L5,6 L8,8 L11,6 L14,6" stroke="#303090" stroke-width="1.2" fill="none"/></svg><div class="tt">Equalizer re...</div><div class="btn" style="right:36px"><svg width="16" height="14"><rect x="5.5" y="2.5" width="5" height="5" fill="none" stroke="#000"/><rect x="5" y="2" width="6" height="2" fill="#000"/><rect x="3.5" y="5.5" width="5" height="5" fill="#d4d0c8" stroke="#000"/><rect x="3" y="5" width="6" height="2" fill="#000"/></svg></div><div class="btn" style="right:20px"><svg width="16" height="14"><rect x="3.5" y="2.5" width="8" height="8" fill="none" stroke="#000"/><rect x="3" y="2" width="9" height="2" fill="#000"/></svg></div><div class="btn" style="right:0px;margin-right:2px"><svg width="16" height="14"><path d="M4.2,3.4 L11.6,9.8 M11.6,3.4 L4.2,9.8" stroke="#000" stroke-width="1.8" fill="none"/></svg></div></div></div>
<div class="mini" style="left:642px;top:602px"><div class="tb"><svg class="ic" width="16" height="14" viewBox="0 0 16 14"><rect x="1.5" y="-0.5" width="10" height="15" fill="#fbf6f6" stroke="#b0b0b0"/><path d="M3.5,1.5 C9,3 9,11 3.5,12.5 M3.5,4.5 C6,5.5 6,8.5 3.5,9.5" stroke="#c84848" stroke-width="1" fill="none"/></svg><div class="tt">Vertical pola...</div><div class="btn" style="right:36px"><svg width="16" height="14"><rect x="5.5" y="2.5" width="5" height="5" fill="none" stroke="#000"/><rect x="5" y="2" width="6" height="2" fill="#000"/><rect x="3.5" y="5.5" width="5" height="5" fill="#d4d0c8" stroke="#000"/><rect x="3" y="5" width="6" height="2" fill="#000"/></svg></div><div class="btn" style="right:20px"><svg width="16" height="14"><rect x="3.5" y="2.5" width="8" height="8" fill="none" stroke="#000"/><rect x="3" y="2" width="9" height="2" fill="#000"/></svg></div><div class="btn" style="right:0px;margin-right:2px"><svg width="16" height="14"><path d="M4.2,3.4 L11.6,9.8 M11.6,3.4 L4.2,9.8" stroke="#000" stroke-width="1.8" fill="none"/></svg></div></div></div>
<div class="mini" style="left:2px;top:626px"><div class="tb"><svg class="ic" width="16" height="14" viewBox="0 0 16 14"><rect x="0.5" y="0.5" width="15" height="13" fill="#fdfdff" stroke="#1c1c30"/><path d="M1,4.5 H15 M1,7.5 H15 M1,10.5 H15 M4.5,1 V13 M8.5,1 V13 M12.5,1 V13" stroke="#dcdcec" stroke-width="1"/><path d="M1,1.5 H15" stroke="#282860" stroke-width="1.4"/><path d="M2,12 C3,6 6,4.5 14,4.5" stroke="#505060" stroke-width="1" fill="none"/></svg><div class="tt">Snapshot</div><div class="btn" style="right:36px"><svg width="16" height="14"><rect x="5.5" y="2.5" width="5" height="5" fill="none" stroke="#000"/><rect x="5" y="2" width="6" height="2" fill="#000"/><rect x="3.5" y="5.5" width="5" height="5" fill="#d4d0c8" stroke="#000"/><rect x="3" y="5" width="6" height="2" fill="#000"/></svg></div><div class="btn" style="right:20px"><svg width="16" height="14"><rect x="3.5" y="2.5" width="8" height="8" fill="none" stroke="#000"/><rect x="3" y="2" width="9" height="2" fill="#000"/></svg></div><div class="btn" style="right:0px;margin-right:2px"><svg width="16" height="14"><path d="M5,4 L12,11 M12,4 L5,11" stroke="#fff" stroke-width="1.4" fill="none"/><path d="M4,3 L11,10 M11,3 L4,10" stroke="#808080" stroke-width="1.4" fill="none"/></svg></div></div></div>
<div class="mini" style="left:162px;top:626px"><div class="tb"><svg class="ic" width="16" height="14" viewBox="0 0 16 14"><rect x="0.5" y="0.5" width="15" height="13" fill="#fdfdff" stroke="#1c1c30"/><path d="M1,4.5 H15 M1,7.5 H15 M1,10.5 H15 M4.5,1 V13 M8.5,1 V13 M12.5,1 V13" stroke="#dcdcec" stroke-width="1"/><path d="M2,3.5 H13" stroke="#803040" stroke-width="1" stroke-dasharray="2 1"/><path d="M6,4 L11,11.5" stroke="#181830" stroke-width="1.3"/><path d="M6.5,4 L2,11" stroke="#a070c0" stroke-width="1.1"/></svg><div class="tt">Net 2 gain</div><div class="btn" style="right:36px"><svg width="16" height="14"><rect x="5.5" y="2.5" width="5" height="5" fill="none" stroke="#000"/><rect x="5" y="2" width="6" height="2" fill="#000"/><rect x="3.5" y="5.5" width="5" height="5" fill="#d4d0c8" stroke="#000"/><rect x="3" y="5" width="6" height="2" fill="#000"/></svg></div><div class="btn" style="right:20px"><svg width="16" height="14"><rect x="3.5" y="2.5" width="8" height="8" fill="none" stroke="#000"/><rect x="3" y="2" width="9" height="2" fill="#000"/></svg></div><div class="btn" style="right:0px;margin-right:2px"><svg width="16" height="14"><path d="M4.2,3.4 L11.6,9.8 M11.6,3.4 L4.2,9.8" stroke="#000" stroke-width="1.8" fill="none"/></svg></div></div></div>
<div class="mini" style="left:322px;top:626px"><div class="tb"><svg class="ic" width="16" height="14" viewBox="0 0 16 14"><rect x="0.5" y="0.5" width="15" height="13" fill="#fdfdff" stroke="#1c1c30"/><path d="M1,4.5 H15 M1,7.5 H15 M1,10.5 H15 M4.5,1 V13 M8.5,1 V13 M12.5,1 V13" stroke="#dcdcec" stroke-width="1"/><path d="M2,3.5 H13" stroke="#803040" stroke-width="1" stroke-dasharray="2 1"/><path d="M6,4 L11,11.5" stroke="#181830" stroke-width="1.3"/><path d="M6.5,4 L2,11" stroke="#a070c0" stroke-width="1.1"/></svg><div class="tt">Net 1 gain</div><div class="btn" style="right:36px"><svg width="16" height="14"><rect x="5.5" y="2.5" width="5" height="5" fill="none" stroke="#000"/><rect x="5" y="2" width="6" height="2" fill="#000"/><rect x="3.5" y="5.5" width="5" height="5" fill="#d4d0c8" stroke="#000"/><rect x="3" y="5" width="6" height="2" fill="#000"/></svg></div><div class="btn" style="right:20px"><svg width="16" height="14"><rect x="3.5" y="2.5" width="8" height="8" fill="none" stroke="#000"/><rect x="3" y="2" width="9" height="2" fill="#000"/></svg></div><div class="btn" style="right:0px;margin-right:2px"><svg width="16" height="14"><path d="M4.2,3.4 L11.6,9.8 M11.6,3.4 L4.2,9.8" stroke="#000" stroke-width="1.8" fill="none"/></svg></div></div></div>
<div class="mini" style="left:482px;top:626px"><div class="tb"><svg class="ic" width="16" height="14" viewBox="0 0 16 14"><rect x="0.5" y="0.5" width="15" height="13" fill="#fdfdff" stroke="#1c1c30"/><path d="M1,4.5 H15 M1,7.5 H15 M1,10.5 H15 M4.5,1 V13 M8.5,1 V13 M12.5,1 V13" stroke="#dcdcec" stroke-width="1"/><path d="M2,3.5 H13" stroke="#803040" stroke-width="1" stroke-dasharray="2 1"/><path d="M6,4 L11,11.5" stroke="#181830" stroke-width="1.3"/><path d="M6.5,4 L2,11" stroke="#a070c0" stroke-width="1.1"/></svg><div class="tt">Common ne...</div><div class="btn" style="right:36px"><svg width="16" height="14"><rect x="5.5" y="2.5" width="5" height="5" fill="none" stroke="#000"/><rect x="5" y="2" width="6" height="2" fill="#000"/><rect x="3.5" y="5.5" width="5" height="5" fill="#d4d0c8" stroke="#000"/><rect x="3" y="5" width="6" height="2" fill="#000"/></svg></div><div class="btn" style="right:20px"><svg width="16" height="14"><rect x="3.5" y="2.5" width="8" height="8" fill="none" stroke="#000"/><rect x="3" y="2" width="9" height="2" fill="#000"/></svg></div><div class="btn" style="right:0px;margin-right:2px"><svg width="16" height="14"><path d="M4.2,3.4 L11.6,9.8 M11.6,3.4 L4.2,9.8" stroke="#000" stroke-width="1.8" fill="none"/></svg></div></div></div>
<div class="mini" style="left:802px;top:626px"><div class="tb"><svg class="ic" width="16" height="14" viewBox="0 0 16 14"><rect x="0.5" y="0.5" width="15" height="13" fill="#fdfdff" stroke="#1c1c30"/><path d="M1,4.5 H15 M1,7.5 H15 M1,10.5 H15 M4.5,1 V13 M8.5,1 V13 M12.5,1 V13" stroke="#dcdcec" stroke-width="1"/><path d="M2,11 H5 L6,8 L7,12 H14" stroke="#303030" stroke-width="1" fill="none"/></svg><div class="tt">Impulse res...</div><div class="btn" style="right:36px"><svg width="16" height="14"><rect x="5.5" y="2.5" width="5" height="5" fill="none" stroke="#000"/><rect x="5" y="2" width="6" height="2" fill="#000"/><rect x="3.5" y="5.5" width="5" height="5" fill="#d4d0c8" stroke="#000"/><rect x="3" y="5" width="6" height="2" fill="#000"/></svg></div><div class="btn" style="right:20px"><svg width="16" height="14"><rect x="3.5" y="2.5" width="8" height="8" fill="none" stroke="#000"/><rect x="3" y="2" width="9" height="2" fill="#000"/></svg></div><div class="btn" style="right:0px;margin-right:2px"><svg width="16" height="14"><path d="M4.2,3.4 L11.6,9.8 M11.6,3.4 L4.2,9.8" stroke="#000" stroke-width="1.8" fill="none"/></svg></div></div></div>
<div class="mini" style="left:962px;top:626px"><div class="tb"><svg class="ic" width="16" height="14" viewBox="0 0 16 14"><rect x="0.5" y="0.5" width="15" height="13" fill="#fdfdff" stroke="#1c1c30"/><path d="M2,10 L5,8 L7,4 L9,8 L11,9 L14,7" stroke="#303030" stroke-width="1" fill="none"/></svg><div class="tt">Input imped...</div><div class="btn" style="right:36px"><svg width="16" height="14"><rect x="5.5" y="2.5" width="5" height="5" fill="none" stroke="#000"/><rect x="5" y="2" width="6" height="2" fill="#000"/><rect x="3.5" y="5.5" width="5" height="5" fill="#d4d0c8" stroke="#000"/><rect x="3" y="5" width="6" height="2" fill="#000"/></svg></div><div class="btn" style="right:20px"><svg width="16" height="14"><rect x="3.5" y="2.5" width="8" height="8" fill="none" stroke="#000"/><rect x="3" y="2" width="9" height="2" fill="#000"/></svg></div><div class="btn" style="right:0px;margin-right:2px"><svg width="16" height="14"><path d="M4.2,3.4 L11.6,9.8 M11.6,3.4 L4.2,9.8" stroke="#000" stroke-width="1.8" fill="none"/></svg></div></div></div>
<div class="mini" style="left:1122px;top:626px"><div class="tb"><svg class="ic" width="16" height="14" viewBox="0 0 16 14"><rect x="0.5" y="0.5" width="15" height="13" fill="#fdfdff" stroke="#1c1c30"/><path d="M2,4 L5,5 L8,10 L14,11" stroke="#303030" stroke-width="1" fill="none"/></svg><div class="tt">Group delay</div><div class="btn" style="right:36px"><svg width="16" height="14"><rect x="5.5" y="2.5" width="5" height="5" fill="none" stroke="#000"/><rect x="5" y="2" width="6" height="2" fill="#000"/><rect x="3.5" y="5.5" width="5" height="5" fill="#d4d0c8" stroke="#000"/><rect x="3" y="5" width="6" height="2" fill="#000"/></svg></div><div class="btn" style="right:20px"><svg width="16" height="14"><rect x="3.5" y="2.5" width="8" height="8" fill="none" stroke="#000"/><rect x="3" y="2" width="9" height="2" fill="#000"/></svg></div><div class="btn" style="right:0px;margin-right:2px"><svg width="16" height="14"><path d="M4.2,3.4 L11.6,9.8 M11.6,3.4 L4.2,9.8" stroke="#000" stroke-width="1.8" fill="none"/></svg></div></div></div>
<div class="wm1">矿石收音机</div><div class="wm2">www.crystalradio.cn</div>
</body></html>
